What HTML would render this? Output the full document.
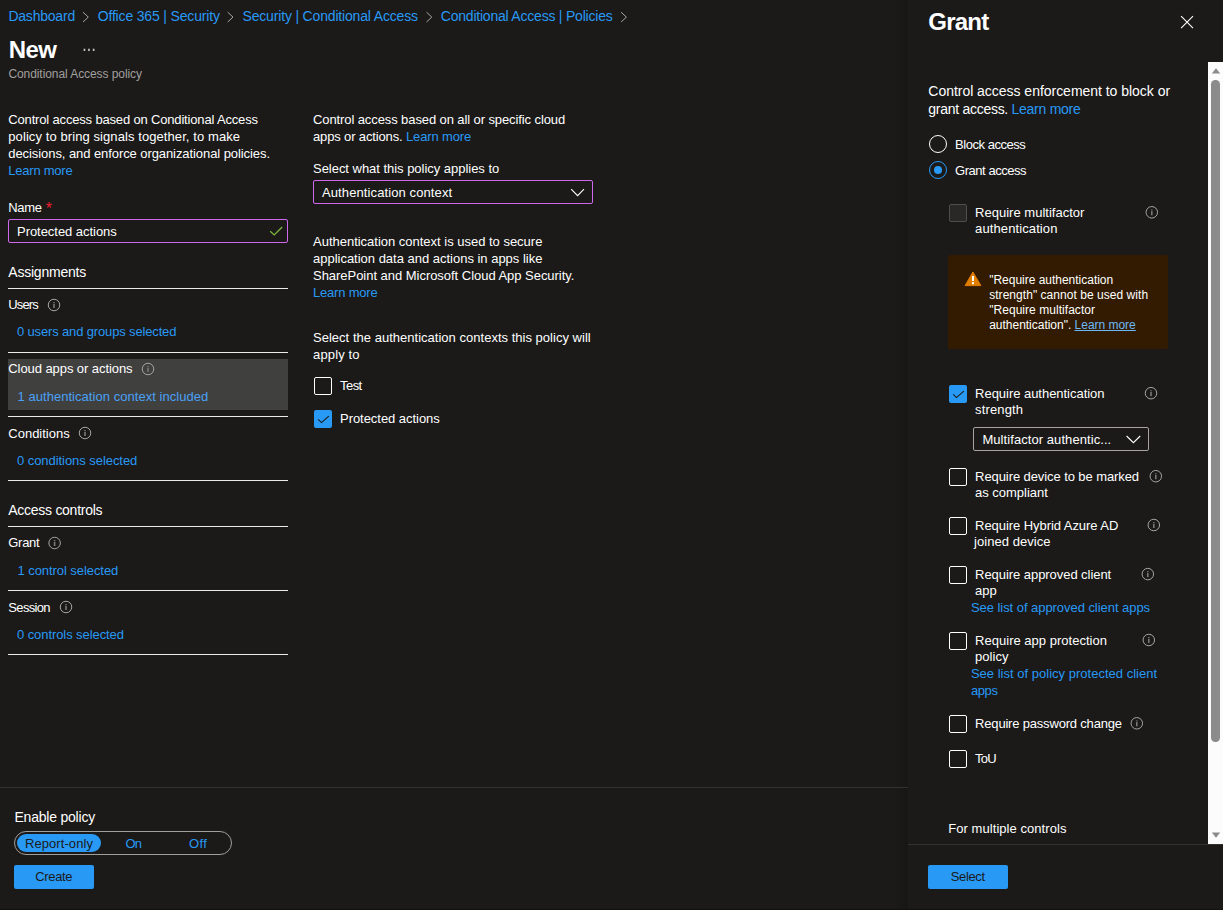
<!DOCTYPE html>
<html lang="en"><head><meta charset="utf-8"><title>New - Conditional Access policy</title>
<style>
html,body{margin:0;padding:0}
body{width:1223px;height:910px;background:#1b1a19;color:#ffffff;font-family:'Liberation Sans', sans-serif;position:relative;overflow:hidden}
.t{position:absolute;white-space:pre;line-height:20px;height:20px}
.b{position:absolute;box-sizing:border-box}
svg{position:absolute;overflow:visible}
</style></head>
<body>
<div class="b" style="left:894px;top:0px;width:14px;height:910px;background:linear-gradient(to right,rgba(0,0,0,0),rgba(0,0,0,.16))"></div>
<div class="b" style="left:908px;top:0px;width:315px;height:910px;background:#1b1a19"></div>
<div class="b" style="left:8px;top:359px;width:280px;height:51px;background:#40403f"></div>
<div class="b" style="left:8px;top:288px;width:280px;height:1px;background:#ebebeb"></div>
<div class="b" style="left:8px;top:352px;width:280px;height:1px;background:#ebebeb"></div>
<div class="b" style="left:8px;top:416px;width:280px;height:1px;background:#ebebeb"></div>
<div class="b" style="left:8px;top:480px;width:280px;height:1px;background:#ebebeb"></div>
<div class="b" style="left:8px;top:526px;width:280px;height:1px;background:#ebebeb"></div>
<div class="b" style="left:8px;top:590px;width:280px;height:1px;background:#ebebeb"></div>
<div class="b" style="left:8px;top:654px;width:280px;height:1px;background:#ebebeb"></div>
<div class="b" style="left:0px;top:787px;width:908px;height:1px;background:#323130"></div>
<div class="b" style="left:908px;top:844px;width:315px;height:1px;background:#323130"></div>
<div class="b" style="left:0px;top:909px;width:1223px;height:1px;background:#111110"></div>
<div class="b" style="left:8px;top:219px;width:280px;height:24px;border:1px solid #ce68ee;border-radius:2px"></div>
<div class="b" style="left:313px;top:180px;width:280px;height:24px;border:1px solid #ce68ee;border-radius:2px"></div>
<div class="b" style="left:973px;top:427px;width:176px;height:24px;border:1px solid #a6a3a0;border-radius:2px"></div>
<div class="b" style="left:314px;top:377px;width:18px;height:18px;border:1px solid #fff;border-radius:2px"></div>
<div class="b" style="left:314px;top:410px;width:18px;height:18px;background:#2899f5;border-radius:2px"></div>
<div class="b" style="left:14px;top:831px;width:218px;height:24px;border:1px solid #a19f9d;border-radius:12px"></div>
<div class="b" style="left:17px;top:834px;width:84px;height:18px;background:#2899f5;border-radius:9px"></div>
<div class="b" style="left:14px;top:865px;width:80px;height:24px;background:#2899f5;border-radius:2px"></div>
<div class="b" style="left:928px;top:865px;width:80px;height:24px;background:#2899f5;border-radius:2px"></div>
<div class="b" style="left:1208px;top:62px;width:15px;height:782px;background:#fcfcfc"></div>
<div class="b" style="left:1211.3px;top:80px;width:8.6px;height:662px;background:#8b8b8b;border-radius:4.3px"></div>
<div class="b" style="left:929px;top:135px;width:18px;height:18px;border:1px solid #fff;border-radius:50%"></div>
<div class="b" style="left:929px;top:161px;width:18px;height:18px;border:1px solid #2899f5;border-radius:50%"></div>
<div class="b" style="left:933.8px;top:165.8px;width:8.4px;height:8.4px;background:#2899f5;border-radius:50%"></div>
<div class="b" style="left:949px;top:204px;width:18px;height:18px;background:#292827;border:1px solid #504e4c;border-radius:2px"></div>
<div class="b" style="left:948px;top:255px;width:220px;height:94px;background:#321b00;border-radius:2px"></div>
<div class="b" style="left:949px;top:385px;width:18px;height:18px;background:#2899f5;border-radius:2px"></div>
<div class="b" style="left:949px;top:468px;width:18px;height:18px;border:1px solid #fff;border-radius:2px"></div>
<div class="b" style="left:949px;top:517px;width:18px;height:18px;border:1px solid #fff;border-radius:2px"></div>
<div class="b" style="left:949px;top:566px;width:18px;height:18px;border:1px solid #fff;border-radius:2px"></div>
<div class="b" style="left:949px;top:632px;width:18px;height:18px;border:1px solid #fff;border-radius:2px"></div>
<div class="b" style="left:949px;top:715px;width:18px;height:18px;border:1px solid #fff;border-radius:2px"></div>
<div class="b" style="left:949px;top:750px;width:18px;height:18px;border:1px solid #fff;border-radius:2px"></div>
<svg width="1223" height="910" style="left:0;top:0" viewBox="0 0 1223 910"><polyline points="83.0,12.2 88.3,17.1 83.0,22" fill="none" stroke="#aaa6a2" stroke-width="1"/><polyline points="227.7,12.2 233.0,17.1 227.7,22" fill="none" stroke="#aaa6a2" stroke-width="1"/><polyline points="426.5,12.2 431.8,17.1 426.5,22" fill="none" stroke="#aaa6a2" stroke-width="1"/><polyline points="621.1,12.2 626.4,17.1 621.1,22" fill="none" stroke="#aaa6a2" stroke-width="1"/><rect x="83.6" y="48.7" width="1.7" height="2.3" fill="#c0bebc"/><rect x="88.1" y="48.7" width="1.7" height="2.3" fill="#c0bebc"/><rect x="92.8" y="48.7" width="1.7" height="2.3" fill="#c0bebc"/><polyline points="270.2,231.2 274.2,234.9 282.2,227" fill="none" stroke="#7fb83e" stroke-width="1.3"/><polyline points="571.2,189.1 577.6,195.6 584,189.1" fill="none" stroke="#fff" stroke-width="1.1"/><polyline points="1126.6,436 1133.4,442.7 1140.2,436" fill="none" stroke="#fff" stroke-width="1.1"/><polyline points="318.2,419.3 321.5,422.6 328.8,416.1" fill="none" stroke="#1b1a19" stroke-width="1.1"/><polyline points="953.2,394.3 956.5,397.6 963.8,391.1" fill="none" stroke="#1b1a19" stroke-width="1.1"/><circle cx="54" cy="305" r="5.75" fill="none" stroke="#a6a4a2" stroke-width="1"/><rect x="53.2" y="302.1" width="1.6" height="1" fill="#7a7876"/><rect x="53.2" y="303.8" width="1.6" height="4.2" fill="#7a7876"/><circle cx="148" cy="369" r="5.75" fill="none" stroke="#a6a4a2" stroke-width="1"/><rect x="147.2" y="366.1" width="1.6" height="1" fill="#7a7876"/><rect x="147.2" y="367.8" width="1.6" height="4.2" fill="#7a7876"/><circle cx="85" cy="433" r="5.75" fill="none" stroke="#a6a4a2" stroke-width="1"/><rect x="84.2" y="430.1" width="1.6" height="1" fill="#7a7876"/><rect x="84.2" y="431.8" width="1.6" height="4.2" fill="#7a7876"/><circle cx="54.6" cy="543" r="5.75" fill="none" stroke="#a6a4a2" stroke-width="1"/><rect x="53.800000000000004" y="540.1" width="1.6" height="1" fill="#7a7876"/><rect x="53.800000000000004" y="541.8" width="1.6" height="4.2" fill="#7a7876"/><circle cx="66" cy="607" r="5.75" fill="none" stroke="#a6a4a2" stroke-width="1"/><rect x="65.2" y="604.1" width="1.6" height="1" fill="#7a7876"/><rect x="65.2" y="605.8" width="1.6" height="4.2" fill="#7a7876"/><circle cx="1151.8" cy="212.3" r="5.75" fill="none" stroke="#a6a4a2" stroke-width="1"/><rect x="1151.0" y="209.4" width="1.6" height="1" fill="#7a7876"/><rect x="1151.0" y="211.10000000000002" width="1.6" height="4.2" fill="#7a7876"/><circle cx="1151" cy="393.2" r="5.75" fill="none" stroke="#a6a4a2" stroke-width="1"/><rect x="1150.2" y="390.3" width="1.6" height="1" fill="#7a7876"/><rect x="1150.2" y="392.0" width="1.6" height="4.2" fill="#7a7876"/><circle cx="1155.8" cy="476.2" r="5.75" fill="none" stroke="#a6a4a2" stroke-width="1"/><rect x="1155.0" y="473.3" width="1.6" height="1" fill="#7a7876"/><rect x="1155.0" y="475.0" width="1.6" height="4.2" fill="#7a7876"/><circle cx="1153.8" cy="525" r="5.75" fill="none" stroke="#a6a4a2" stroke-width="1"/><rect x="1153.0" y="522.1" width="1.6" height="1" fill="#7a7876"/><rect x="1153.0" y="523.8" width="1.6" height="4.2" fill="#7a7876"/><circle cx="1147.8" cy="574.1" r="5.75" fill="none" stroke="#a6a4a2" stroke-width="1"/><rect x="1147.0" y="571.2" width="1.6" height="1" fill="#7a7876"/><rect x="1147.0" y="572.9" width="1.6" height="4.2" fill="#7a7876"/><circle cx="1148.8" cy="640" r="5.75" fill="none" stroke="#a6a4a2" stroke-width="1"/><rect x="1148.0" y="637.1" width="1.6" height="1" fill="#7a7876"/><rect x="1148.0" y="638.8" width="1.6" height="4.2" fill="#7a7876"/><circle cx="1136.8" cy="723.3" r="5.75" fill="none" stroke="#a6a4a2" stroke-width="1"/><rect x="1136.0" y="720.4" width="1.6" height="1" fill="#7a7876"/><rect x="1136.0" y="722.0999999999999" width="1.6" height="4.2" fill="#7a7876"/><path d="M1181.1,16.2 L1193,28.1 M1193,16.2 L1181.1,28.1" stroke="#fff" stroke-width="1.1" fill="none"/><polygon points="1211.8,73.6 1220.2,73.6 1216,68.2" fill="#8b8b8b"/><polygon points="1211.8,832.4 1220.2,832.4 1216,837.8" fill="#8b8b8b"/><path d="M972.9,272 L980.9,285.6 L965.1,285.6 Z" fill="#e17d00" stroke="#e17d00" stroke-width="1" stroke-linejoin="round"/><rect x="972" y="276" width="2" height="5" fill="#fff"/><rect x="972" y="282.1" width="2" height="2.1" fill="#fff"/></svg>
<div class="t" style="left:8.4px;top:6.0px;font-size:14px;letter-spacing:-0.213px;"><span style="color:#2899f5;">Dashboard</span></div>
<div class="t" style="left:97.7px;top:6.0px;font-size:14px;letter-spacing:-0.163px;"><span style="color:#2899f5;">Office 365 | Security</span></div>
<div class="t" style="left:242.5px;top:6.0px;font-size:14px;letter-spacing:-0.171px;"><span style="color:#2899f5;">Security | Conditional Access</span></div>
<div class="t" style="left:440.8px;top:6.0px;font-size:14px;letter-spacing:-0.216px;"><span style="color:#2899f5;">Conditional Access | Policies</span></div>
<div class="t" style="left:8.7px;top:40.0px;font-size:24px;font-weight:700;letter-spacing:-0.530px;">New</div>
<div class="t" style="left:8.4px;top:64.0px;font-size:12px;letter-spacing:-0.075px;"><span style="color:#a19f9d;">Conditional Access policy</span></div>
<div class="t" style="left:8.3px;top:110.0px;font-size:13px;letter-spacing:-0.167px;">Control access based on Conditional Access</div>
<div class="t" style="left:8.3px;top:127.0px;font-size:13px;letter-spacing:0.084px;">policy to bring signals together, to make</div>
<div class="t" style="left:8.3px;top:144.0px;font-size:13px;letter-spacing:-0.076px;">decisions, and enforce organizational policies.</div>
<div class="t" style="left:8.3px;top:161.0px;font-size:13px;letter-spacing:-0.232px;"><span style="color:#2899f5;">Learn more</span></div>
<div class="t" style="left:8.3px;top:198.0px;font-size:13px;letter-spacing:-0.329px;">Name</div>
<div class="t" style="left:45.8px;top:198.5px;font-size:16px;"><span style="color:#ee1c2e;">*</span></div>
<div class="t" style="left:17.0px;top:221.5px;font-size:13px;letter-spacing:-0.041px;">Protected actions</div>
<div class="t" style="left:8.3px;top:262.0px;font-size:14px;letter-spacing:-0.226px;">Assignments</div>
<div class="t" style="left:8.3px;top:295.0px;font-size:13px;letter-spacing:-0.863px;">Users</div>
<div class="t" style="left:17.0px;top:322.0px;font-size:13px;letter-spacing:-0.151px;"><span style="color:#2899f5;">0 users and groups selected</span></div>
<div class="t" style="left:8.3px;top:359.0px;font-size:13px;letter-spacing:-0.073px;">Cloud apps or actions</div>
<div class="t" style="left:17.5px;top:386.5px;font-size:13px;letter-spacing:0.045px;"><span style="color:#4aa0f6;">1 authentication context included</span></div>
<div class="t" style="left:8.3px;top:423.5px;font-size:13px;letter-spacing:-0.004px;">Conditions</div>
<div class="t" style="left:17.0px;top:450.5px;font-size:13px;letter-spacing:-0.056px;"><span style="color:#2899f5;">0 conditions selected</span></div>
<div class="t" style="left:8.3px;top:500.0px;font-size:14px;letter-spacing:-0.275px;">Access controls</div>
<div class="t" style="left:8.3px;top:533.0px;font-size:13px;letter-spacing:-0.304px;">Grant</div>
<div class="t" style="left:17.5px;top:560.5px;font-size:13px;letter-spacing:-0.065px;"><span style="color:#2899f5;">1 control selected</span></div>
<div class="t" style="left:8.3px;top:597.5px;font-size:13px;letter-spacing:-0.658px;">Session</div>
<div class="t" style="left:17.0px;top:624.5px;font-size:13px;letter-spacing:-0.078px;"><span style="color:#2899f5;">0 controls selected</span></div>
<div class="t" style="left:313.0px;top:110.0px;font-size:13px;letter-spacing:-0.098px;">Control access based on all or specific cloud</div>
<div class="t" style="left:313.0px;top:127.0px;font-size:13px;letter-spacing:-0.141px;">apps or actions. <span style="color:#2899f5;">Learn more</span></div>
<div class="t" style="left:313.0px;top:159.0px;font-size:13px;letter-spacing:-0.029px;">Select what this policy applies to</div>
<div class="t" style="left:322.0px;top:183.0px;font-size:13px;letter-spacing:0.104px;">Authentication context</div>
<div class="t" style="left:313.0px;top:232.0px;font-size:13px;letter-spacing:-0.011px;">Authentication context is used to secure</div>
<div class="t" style="left:313.0px;top:249.0px;font-size:13px;letter-spacing:-0.011px;">application data and actions in apps like</div>
<div class="t" style="left:313.0px;top:266.0px;font-size:13px;letter-spacing:-0.032px;">SharePoint and Microsoft Cloud App Security.</div>
<div class="t" style="left:313.0px;top:283.0px;font-size:13px;letter-spacing:-0.198px;"><span style="color:#2899f5;">Learn more</span></div>
<div class="t" style="left:313.0px;top:328.0px;font-size:13px;letter-spacing:0.019px;">Select the authentication contexts this policy will</div>
<div class="t" style="left:313.0px;top:345.0px;font-size:13px;letter-spacing:0.150px;">apply to</div>
<div class="t" style="left:340.0px;top:376.0px;font-size:13px;letter-spacing:-0.548px;">Test</div>
<div class="t" style="left:340.0px;top:409.0px;font-size:13px;letter-spacing:-0.041px;">Protected actions</div>
<div class="t" style="left:14.5px;top:807.0px;font-size:14px;letter-spacing:-0.215px;">Enable policy</div>
<div class="t" style="left:25.0px;top:833.5px;font-size:13px;letter-spacing:0.070px;"><span style="color:#1b1a19;">Report-only</span></div>
<div class="t" style="left:125.6px;top:833.5px;font-size:13px;letter-spacing:-0.944px;"><span style="color:#2899f5;">On</span></div>
<div class="t" style="left:189.0px;top:833.5px;font-size:13px;letter-spacing:0.345px;"><span style="color:#2899f5;">Off</span></div>
<div class="t" style="left:35.3px;top:867.0px;font-size:13px;letter-spacing:-0.366px;"><span style="color:#1b1a19;">Create</span></div>
<div class="t" style="left:928.3px;top:12.0px;font-size:24px;font-weight:700;letter-spacing:-0.779px;">Grant</div>
<div class="t" style="left:928.3px;top:81.0px;font-size:14px;letter-spacing:-0.027px;">Control access enforcement to block or</div>
<div class="t" style="left:928.3px;top:99.0px;font-size:14px;letter-spacing:-0.276px;">grant access. <span style="color:#2899f5;">Learn more</span></div>
<div class="t" style="left:955.1px;top:135.0px;font-size:13px;letter-spacing:-0.470px;">Block access</div>
<div class="t" style="left:955.1px;top:161.0px;font-size:13px;letter-spacing:-0.472px;">Grant access</div>
<div class="t" style="left:975.1px;top:203.0px;font-size:13px;letter-spacing:0.011px;">Require multifactor</div>
<div class="t" style="left:975.1px;top:219.0px;font-size:13px;letter-spacing:0.104px;">authentication</div>
<div class="t" style="left:989.2px;top:269.7px;font-size:12px;letter-spacing:-0.016px;">&quot;Require authentication</div>
<div class="t" style="left:989.2px;top:284.7px;font-size:12px;letter-spacing:0.043px;">strength&quot; cannot be used with</div>
<div class="t" style="left:989.2px;top:299.7px;font-size:12px;letter-spacing:0.044px;">&quot;Require multifactor</div>
<div class="t" style="left:989.2px;top:314.7px;font-size:12px;letter-spacing:-0.017px;">authentication&quot;. <span style="color:#6cb8f6;text-decoration:underline">Learn more</span></div>
<div class="t" style="left:975.1px;top:384.0px;font-size:13px;letter-spacing:-0.033px;">Require authentication</div>
<div class="t" style="left:975.1px;top:400.0px;font-size:13px;letter-spacing:0.131px;">strength</div>
<div class="t" style="left:982.4px;top:430.0px;font-size:13px;letter-spacing:0.071px;">Multifactor authentic...</div>
<div class="t" style="left:975.1px;top:467.0px;font-size:13px;letter-spacing:-0.085px;">Require device to be marked</div>
<div class="t" style="left:975.1px;top:483.0px;font-size:13px;letter-spacing:-0.026px;">as compliant</div>
<div class="t" style="left:975.1px;top:516.0px;font-size:13px;letter-spacing:-0.060px;">Require Hybrid Azure AD</div>
<div class="t" style="left:974.1px;top:532.0px;font-size:13px;letter-spacing:0.051px;">joined device</div>
<div class="t" style="left:975.1px;top:565.0px;font-size:13px;letter-spacing:-0.055px;">Require approved client</div>
<div class="t" style="left:975.1px;top:581.0px;font-size:13px;letter-spacing:-0.052px;">app</div>
<div class="t" style="left:970.9px;top:598.0px;font-size:13px;letter-spacing:-0.047px;"><span style="color:#2899f5;">See list of approved client apps</span></div>
<div class="t" style="left:975.1px;top:631.0px;font-size:13px;letter-spacing:0.018px;">Require app protection</div>
<div class="t" style="left:975.1px;top:647.0px;font-size:13px;letter-spacing:0.030px;">policy</div>
<div class="t" style="left:970.9px;top:664.0px;font-size:13px;letter-spacing:0.014px;"><span style="color:#2899f5;">See list of policy protected client</span></div>
<div class="t" style="left:970.9px;top:681.0px;font-size:13px;letter-spacing:-0.368px;"><span style="color:#2899f5;">apps</span></div>
<div class="t" style="left:975.1px;top:714.0px;font-size:13px;letter-spacing:-0.188px;">Require password change</div>
<div class="t" style="left:975.1px;top:749.0px;font-size:13px;letter-spacing:-0.762px;">ToU</div>
<div class="t" style="left:948.3px;top:819.0px;font-size:13px;letter-spacing:0.053px;">For multiple controls</div>
<div class="t" style="left:950.8px;top:867.0px;font-size:13px;letter-spacing:-0.388px;"><span style="color:#1b1a19;">Select</span></div>
</body></html>
